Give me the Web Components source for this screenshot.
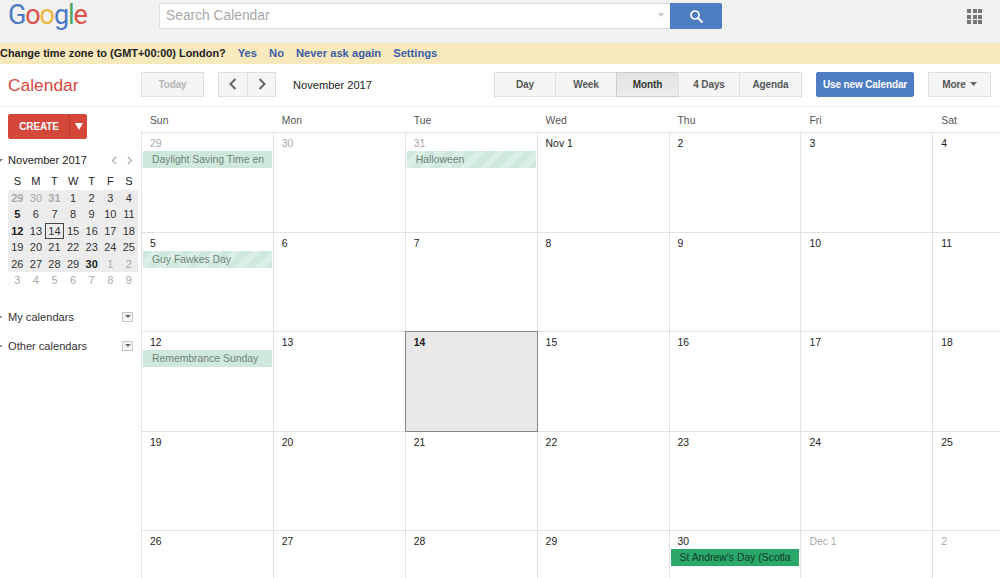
<!DOCTYPE html>
<html lang="en">
<head>
<meta charset="utf-8">
<title>Google Calendar</title>
<style>
html,body{margin:0;padding:0;height:100%;overflow:hidden;background:#fff;font-family:"Liberation Sans",Arial,sans-serif;color:#222}
</style>
</head>
<body>
<cal-app></cal-app>
<script>
function comp(name, css, html, extra){
  const t=document.createElement('template');
  t.innerHTML='<style>'+css+'</style>'+html;
  customElements.define(name, class extends HTMLElement{
    constructor(){super();this.attachShadow({mode:'open'}).appendChild(t.content.cloneNode(true));}
    connectedCallback(){ if(extra) extra.call(this,this.shadowRoot); }
  });
}
comp('cal-header',`
:host{display:flex;height:43px;background:#f1f1f1;box-sizing:border-box;align-items:flex-start}
.logo{width:151px;height:38px;padding-left:8px;box-sizing:border-box;font:400 27px/30px Roboto,sans-serif;letter-spacing:-1.1px;white-space:nowrap}
.logo span:nth-child(1),.logo span:nth-child(4){color:#4a7ac4}
.logo span:nth-child(2),.logo span:nth-child(6){color:#d9534a}
.logo span:nth-child(3){color:#edb73b}
.logo span:nth-child(5){color:#4fa860}
.search{margin-top:3px;width:511px;height:26px;box-sizing:border-box;background:#fff;border:1px solid #dcdcdc;border-right:0;display:flex;align-items:center;justify-content:space-between;padding:0 6px 2px 6px;font-size:13.8px;color:#a8a8a8;margin-left:8px}
.drop{width:0;height:0;border:3.5px solid transparent;border-top:4px solid #c6c6c6;border-bottom:0}
.btn{margin-top:3px;width:52px;height:26px;background:#4f7dc2;border-radius:0 2px 2px 0;display:flex;align-items:center;justify-content:center}
.apps{margin:9px 0 0 245px;width:15px;height:15px;display:grid;grid-template-columns:repeat(3,4px);grid-auto-rows:4px;gap:1.5px}
.apps i{background:#757575}
`,`<div class="logo"><span>G</span><span>o</span><span>o</span><span>g</span><span>l</span><span>e</span></div>
<div class="search"><span>Search Calendar</span><span class="drop"></span></div>
<div class="btn"><svg width="15" height="15" viewBox="0 0 15 15" fill="none" stroke="#fff"><circle cx="6" cy="6" r="4" stroke-width="1.7"/><path d="M9 9l4.500 4.500" stroke-width="2.1"/></svg></div>
<div class="apps"><i></i><i></i><i></i><i></i><i></i><i></i><i></i><i></i><i></i></div>`);

comp('cal-banner',`
:host{display:flex;height:21px;padding-bottom:2px;box-sizing:border-box;background:#f8e9bd;align-items:center;font-size:10.95px;font-weight:700;color:#222;white-space:nowrap;gap:12px}
span:first-child{margin-left:-3px}
a{color:#3c5ea8;font-size:11.2px}
`,`<span>Change time zone to (GMT+00:00) London?</span><a>Yes</a><a>No</a><a>Never ask again</a><a>Settings</a>`);

comp('tb-btn',`
:host{display:flex;align-items:center;justify-content:center;box-sizing:border-box;height:25px;padding-bottom:1px;background:#f5f5f5;border:1px solid #dfdfdf;font-size:10px;letter-spacing:-.12px;font-weight:700;color:#555;white-space:nowrap;margin-left:-1px}
:host([on]){background:linear-gradient(#e2e2e2,#ececec);border-color:#ccc;color:#333}
:host([off]){color:#b4b4b4;margin-left:0}
:host([primary]){background:#4f7dc2;border-color:#4f7dc2;color:#fff;border-radius:2px;margin-left:0}
`,`<slot></slot>`);

comp('cal-toolbar',`
:host{display:flex;height:43px;padding-top:8px;box-sizing:border-box;align-items:flex-start;border-bottom:1px solid #ededed}
.title{width:141px;padding-left:8px;box-sizing:border-box;color:#d8493e;font-size:17.4px;line-height:27px}
.nav{display:flex;margin-left:14px}
.mon{margin-left:17px;width:201px;font-size:11.100px;color:#222;line-height:26px}
.views{display:flex}
`,`<div class="title">Calendar</div>
<tb-btn off style="width:63px">Today</tb-btn>
<div class="nav">
<tb-btn style="width:30px;margin:0"><svg width="10" height="14" viewBox="0 0 10 14" fill="none" stroke="#666" stroke-width="2"><path d="M7.500 2L2.500 7l5 5"/></svg></tb-btn>
<tb-btn style="width:29px"><svg width="10" height="14" viewBox="0 0 10 14" fill="none" stroke="#666" stroke-width="2"><path d="M2.500 2l5 5-5 5"/></svg></tb-btn>
</div>
<div class="mon">November 2017</div>
<div class="views">
<tb-btn style="width:62px;margin:0">Day</tb-btn><tb-btn style="width:62px">Week</tb-btn><tb-btn on style="width:63px">Month</tb-btn><tb-btn style="width:62px">4 Days</tb-btn><tb-btn style="width:63px">Agenda</tb-btn>
</div>
<tb-btn primary style="width:98px;margin-left:14px">Use new Calendar</tb-btn>
<tb-btn style="width:63px;margin-left:14px">More<svg width="7" height="4" viewBox="0 0 7 4" style="margin-left:4px"><path d="M0 0h7L3.500 4z" fill="#666"/></svg></tb-btn>`);

comp('mini-cal',`
:host{display:block;margin-top:13px;font-size:11px}
.top{display:flex;align-items:center;height:16px;font-size:11.1px;color:#222;position:relative;padding-left:8px}
.top .tri{position:absolute;left:-3px;top:7px;border:3px solid transparent;border-top:3px solid #777;border-bottom:0;width:0}
.arrows{margin-left:auto;display:flex;gap:8px;padding-right:8px}
.grid{display:grid;grid-template-columns:repeat(7,18.6px);grid-auto-rows:16.5px;margin:5px 0 0 8px;width:131px;text-align:center;line-height:16.5px;color:#333}
.grid div{box-sizing:border-box}
.s{background:#ececec}
.m{color:#aaa}
.b{font-weight:700;color:#222}
.t{box-shadow:inset 0 0 0 1px #444}
`,`<div class="top"><span class="tri"></span>November 2017<span class="arrows">
<svg width="7" height="9" viewBox="0 0 7 9" fill="none" stroke="#aaa" stroke-width="1.2"><path d="M5 1L1.500 4.500 5 8"/></svg>
<svg width="7" height="9" viewBox="0 0 7 9" fill="none" stroke="#aaa" stroke-width="1.2"><path d="M2 1l3.500 3.500L2 8"/></svg></span></div>
<div class="grid" id="g"></div>`,function(r){
  const g=r.getElementById('g');
  if(g.children.length) return;
  const rows=[['S','M','T','W','T','F','S'],
  ['29','30','31','1','2','3','4'],['5','6','7','8','9','10','11'],['12','13','14','15','16','17','18'],
  ['19','20','21','22','23','24','25'],['26','27','28','29','30','1','2'],['3','4','5','6','7','8','9']];
  rows.forEach((row,ri)=>row.forEach((v,ci)=>{
    const d=document.createElement('div');d.textContent=v;
    if(ri>=1&&ri<=5) d.classList.add('s');
    if(ri==6||(ri==1&&ci<3)||(ri==5&&ci>4)) d.classList.add('m');
    if(ri==0) d.style.color='#222';
    if((ri==2&&ci==0)||(ri==3&&ci==0)||(ri==5&&ci==4)) d.classList.add('b');
    if(ri==1&&(ci==0||ci==2)) d.style.fontWeight='700';
    if(ri==3&&ci==2) d.classList.add('t');
    g.appendChild(d);
  }));
});

comp('side-item',`
:host{display:flex;align-items:center;height:16px;font-size:11.100px;color:#333;padding-left:8px;position:relative;width:133px;box-sizing:border-box}
.tri{position:absolute;left:0;top:7px;width:2px;height:2px;background:#999}
.box{margin-left:auto;width:11px;height:10px;box-sizing:border-box;border:1px solid #c8c8c8;background:#f5f5f5;display:flex;align-items:center;justify-content:center}
.box i{border:3px solid transparent;border-top:3px solid #666;border-bottom:0}
`,`<span class="tri"></span><slot></slot><span class="box"><i></i></span>`);

comp('cal-sidebar',`
:host{display:block;width:140.95px;flex:none;box-sizing:border-box;padding-top:7px}
.create{display:flex;margin-left:8px;width:79px;height:25px;background:#d4473a;border-radius:2px;color:#fff;font-size:10px;letter-spacing:-.15px;font-weight:700;line-height:25px}
.create b{width:62px;text-align:center;border-right:1px solid #b93a2f;box-sizing:border-box;padding-left:1px}
.create i{flex:1;display:flex;align-items:center;justify-content:center}
.create i::after{content:"";border:4px solid transparent;border-top:7px solid #fff;border-bottom:0}
side-item{margin-top:13px}
side-item.first{margin-top:20px}
`,`<div class="create"><b>CREATE</b><i></i></div>
<mini-cal></mini-cal>
<side-item class="first">My calendars</side-item>
<side-item>Other calendars</side-item>`);

comp('cal-event',`
:host{display:block;height:17px;margin:1px 1px 0 1px;background:#cfe8dc;color:#6f8579;font-size:10.4px;line-height:17px;padding:0 8px 0 9px;white-space:nowrap}
:host([striped]){background:repeating-linear-gradient(135deg,#cfe8dc 0 7px,#dcefe6 7px 14px)}
:host([solid]){background:#2aa86a;color:#123a25}
div{overflow:hidden}
`,`<div><slot></slot></div>`);

comp('cal-cell',`
:host{display:block;box-sizing:border-box;border-left:1px solid #e2e2e2;border-top:1px solid #e2e2e2;padding-top:4px;overflow:hidden}
.n{font-size:10.4px;line-height:13px;padding-left:8px;color:#222}
:host([other]) .n{color:#a8a8a8}
:host([today]){background:#e8e8e8;border:1px solid #888;margin:0 -1px -1px 0;z-index:1}
:host([today]) .n{font-weight:700}
`,`<div class="n"></div><slot></slot>`,function(r){ r.querySelector('.n').textContent=this.getAttribute('d'); });

comp('cal-month',`
:host{display:block;flex:none;width:924px}
.head,.grid{display:grid;grid-template-columns:repeat(7,131.9px)}
.head{height:25.2px;font-size:10.4px;color:#555;line-height:27px}
.head span{padding-left:9px}
.grid{grid-auto-rows:99.5px}
`,`<div class="head"><span>Sun</span><span>Mon</span><span>Tue</span><span>Wed</span><span>Thu</span><span>Fri</span><span>Sat</span></div>
<div class="grid" id="g"></div>`,function(r){
  const g=r.getElementById('g');
  if(g.children.length) return;
  const days=[['29',1],['30',1],['31',1],['Nov 1'],['2'],['3'],['4'],
  ['5'],['6'],['7'],['8'],['9'],['10'],['11'],
  ['12'],['13'],['14'],['15'],['16'],['17'],['18'],
  ['19'],['20'],['21'],['22'],['23'],['24'],['25'],
  ['26'],['27'],['28'],['29'],['30'],['Dec 1',1],['2',1]];
  const ev={0:['Daylight Saving Time en',''],2:['Halloween','striped'],7:['Guy Fawkes Day','striped'],14:['Remembrance Sunday',''],32:["St Andrew's Day (Scotla",'solid']};
  days.forEach((d,i)=>{
    const c=document.createElement('cal-cell');
    c.setAttribute('d',d[0]);
    if(d[1]) c.setAttribute('other','');
    if(i==16) c.setAttribute('today','');
    if(ev[i]){const e=document.createElement('cal-event');e.textContent=ev[i][0];if(ev[i][1])e.setAttribute(ev[i][1],'');c.appendChild(e);}
    g.appendChild(c);
  });
});

comp('cal-app',`
:host{display:block;width:1000px;height:578px;overflow:hidden}
main{display:flex}
`,`<cal-header></cal-header><cal-banner></cal-banner><cal-toolbar></cal-toolbar>
<main><cal-sidebar></cal-sidebar><cal-month></cal-month></main>`);
</script>
</body>
</html>
